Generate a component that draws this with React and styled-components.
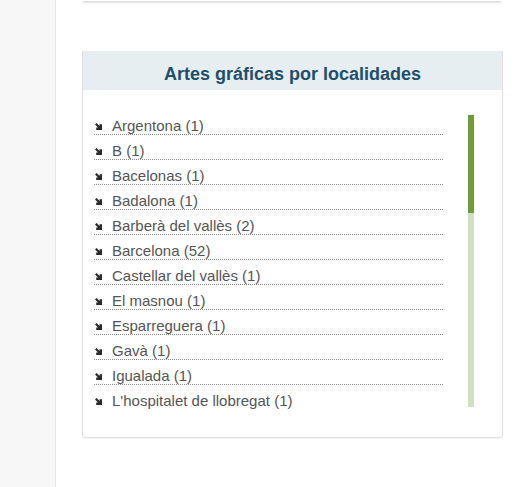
import React from "react";
import styled, { createGlobalStyle } from "styled-components";

const GlobalStyle = createGlobalStyle`
  html, body {
    margin: 0;
    padding: 0;
    background: #ffffff;
    font-family: "Liberation Sans", Arial, sans-serif;
  }
`;

const places = [
  ["Argentona", 1],
  ["B", 1],
  ["Bacelonas", 1],
  ["Badalona", 1],
  ["Barberà del vallès", 2],
  ["Barcelona", 52],
  ["Castellar del vallès", 1],
  ["El masnou", 1],
  ["Esparreguera", 1],
  ["Gavà", 1],
  ["Igualada", 1],
  ["L'hospitalet de llobregat", 1],
];

export default function App() {
  return (
    <>
      <GlobalStyle />
      <StyledPage>
        <StyledSide />
        <StyledMain>
          <StyledTopBox />
          <StyledPanel>
            <StyledHeader>Artes gráficas por localidades</StyledHeader>
            <StyledBody>
              <StyledList>
                {places.map(([name, count]) => (
                  <StyledItem key={name}>
                    <Arrow />
                    <a href="#">
                      {name} ({count})
                    </a>
                  </StyledItem>
                ))}
              </StyledList>
              <StyledScrollbar>
                <StyledThumb />
              </StyledScrollbar>
            </StyledBody>
          </StyledPanel>
        </StyledMain>
      </StyledPage>
    </>
  );
}

function Arrow() {
  return (
    <StyledArrow viewBox="0 0 7 7" aria-hidden="true">
      <path
        d="M0 1.6 L1.6 0 L4.6 3 L4.6 1.2 L7 1.2 L7 7 L1.2 7 L1.2 4.6 L3 4.6 Z"
        fill="#2a2a2a"
      />
    </StyledArrow>
  );
}

const StyledPage = styled.div`
  display: flex;
  min-height: 487px;
`;

const StyledSide = styled.div`
  width: 55px;
  flex-shrink: 0;
  background: #f7f7f7;
  border-right: 1px solid #e6e6e6;
`;

const StyledMain = styled.div`
  flex: 1;
  padding: 0 28px 0 26px;
  display: flex;
  flex-direction: column;
`;

const StyledTopBox = styled.div`
  height: 1px;
  margin: 0 2px 0 1px;
  background: #ffffff;
  border-bottom: 1px solid #dedede;
  box-shadow: 0 1px 2px rgba(0, 0, 0, 0.12);
`;

const StyledPanel = styled.div`
  margin-top: 49px;
  border: 1px solid #e0e0e0;
  border-top: none;
  border-radius: 0 0 4px 4px;
  box-shadow: 0 1px 1px rgba(0, 0, 0, 0.05);
`;

const StyledHeader = styled.h3`
  margin: 0;
  height: 32px;
  padding-top: 7px;
  line-height: 32px;
  background: #e6eef2;
  color: #1f4e6b;
  font-size: 18px;
  font-weight: bold;
  text-align: center;
`;

const StyledBody = styled.div`
  display: flex;
  padding: 20px 28px 27px 11px;
`;

const StyledList = styled.ul`
  flex: 1;
  margin: 0 25px 0 0;
  padding: 0;
  list-style: none;
`;

const StyledItem = styled.li`
  display: flex;
  align-items: center;
  height: 17px;
  padding-top: 7px;
  line-height: 17px;
  border-bottom: 1px dotted #8a8a8a;
  font-size: 15px;

  &:last-child {
    border-bottom-color: transparent;
  }

  a {
    color: #555555;
    text-decoration: none;
  }
`;

const StyledArrow = styled.svg`
  width: 7px;
  height: 7px;
  margin: 1px 10px 0 1px;
  flex-shrink: 0;
`;

const StyledScrollbar = styled.div`
  width: 6px;
  height: 292px;
  margin-top: 5px;
  background: #d1e0c2;
  flex-shrink: 0;
`;

const StyledThumb = styled.div`
  height: 98px;
  background: #6f9b3b;
`;
